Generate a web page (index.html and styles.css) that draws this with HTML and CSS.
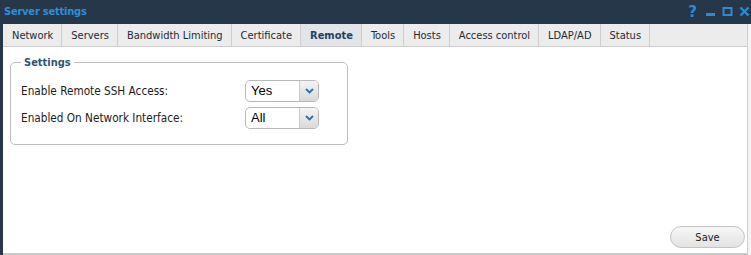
FILE: index.html
```html
<!DOCTYPE html>
<html lang="en">
<head>
  <meta charset="UTF-8" />
  <title>Server settings</title>
  <link rel="stylesheet" href="styles.css">
</head>
<body>

  <div class="window">
    <div class="titlebar">
      <span class="title">Server settings</span>
      <div class="controls">
        <span class="help">?</span>
        <svg width="11" height="11" viewBox="0 0 11 11"><rect x="1" y="7" width="9" height="3" fill="#2a8ad2"/></svg>
        <svg width="11" height="11" viewBox="0 0 11 11"><rect x="1.5" y="2" width="8" height="7" fill="none" stroke="#2a8ad2" stroke-width="2"/></svg>
        <svg width="11" height="11" viewBox="0 0 11 11"><path d="M1.5 1.5 L9.5 9.5 M9.5 1.5 L1.5 9.5" stroke="#2a8ad2" stroke-width="2.4"/></svg>
      </div>
    </div>

    <div class="frame">
      <ul class="tabs">
        <li>Network</li>
        <li>Servers</li>
        <li>Bandwidth Limiting</li>
        <li>Certificate</li>
        <li class="active">Remote</li>
        <li>Tools</li>
        <li>Hosts</li>
        <li>Access control</li>
        <li>LDAP/AD</li>
        <li>Status</li>
      </ul>

      <div class="content">
        <fieldset class="settings">
          <legend>Settings</legend>
          <div class="form-row">
            <label>Enable Remote SSH Access:</label>
            <div class="select">
              <span class="value">Yes</span>
              <span class="arrow"><svg width="9" height="6" viewBox="0 0 9 6"><path d="M1 1 L4.5 4.5 L8 1" fill="none" stroke="#2f6fa8" stroke-width="1.8"/></svg></span>
            </div>
          </div>
          <div class="form-row">
            <label>Enabled On Network Interface:</label>
            <div class="select">
              <span class="value">All</span>
              <span class="arrow"><svg width="9" height="6" viewBox="0 0 9 6"><path d="M1 1 L4.5 4.5 L8 1" fill="none" stroke="#2f6fa8" stroke-width="1.8"/></svg></span>
            </div>
          </div>
        </fieldset>

        <div class="footer">
          <button class="save">Save</button>
        </div>
      </div>
    </div>
  </div>

</body>
</html>
```

FILE: styles.css
```css
body {
  margin: 0;
  font-family: 'DejaVu Sans Condensed', 'DejaVu Sans', sans-serif;
  background: #fff;
}

.window {
  width: 751px;
  height: 255px;
  display: flex;
  flex-direction: column;
  background: #27374a;
}

.titlebar {
  height: 24px;
  display: flex;
  align-items: center;
  justify-content: space-between;
  padding: 0 1px 0 4px;
}

.title {
  color: #2b8fd8;
  font-weight: bold;
  font-size: 11px;
  letter-spacing: -0.2px;
  margin-top: -2px;
}

.controls {
  display: flex;
  align-items: center;
  gap: 6px;
  margin-top: -1px;
}

.controls .help {
  color: #2a8ad2;
  font-weight: bold;
  font-size: 15px;
  font-family: 'DejaVu Sans', sans-serif;
  margin-right: 2px;
}

.frame {
  flex: 1;
  margin: 0 3px 0 3px;
  background: #fff;
  display: flex;
  flex-direction: column;
  border-right: 1px solid #cfcfcf;
  border-bottom: 2px solid #c9c9c9;
  box-shadow: 3px 0 0 #f4f4f4;
}

.tabs {
  list-style: none;
  margin: 0;
  padding: 0;
  display: flex;
  height: 22px;
  background: #ececec;
  border-bottom: 1px solid #cccccc;
}

.tabs li {
  padding: 1px 8px 0 9px;
  font-size: 11px;
  color: #1d2a36;
  line-height: 21px;
  border-right: 1px solid #cfcfcf;
}

.tabs li.active {
  background: #e1e5e9;
  color: #1f3f5e;
  font-weight: bold;
}

.content {
  flex: 1;
  display: flex;
  flex-direction: column;
  justify-content: space-between;
}

.settings {
  width: 338px;
  box-sizing: border-box;
  margin: 9px 0 0 7px;
  padding: 8px 10px 13px 10px;
  border: 1px solid #bdbdbd;
  border-radius: 5px;
}

.settings legend {
  font-weight: bold;
  font-size: 11px;
  color: #2c5670;
  padding: 0 3px;
}

.form-row {
  display: flex;
  align-items: center;
  height: 27px;
}

.form-row label {
  width: 224px;
  font-size: 11.7px;
  color: #1c1c1c;
}

.select {
  width: 74px;
  height: 22px;
  box-sizing: border-box;
  border: 1px solid #b9b9b9;
  border-radius: 5px;
  display: flex;
  overflow: hidden;
  background: #fff;
}

.select .value {
  flex: 1;
  font-family: 'Liberation Sans', sans-serif;
  font-size: 13px;
  line-height: 20px;
  padding-left: 5px;
  color: #000;
}

.select .arrow {
  width: 18px;
  display: flex;
  align-items: center;
  justify-content: center;
  border-left: 1px solid #c9c9c9;
  background: linear-gradient(#f4f4f4, #d9d9d9);
}

.footer {
  display: flex;
  justify-content: flex-end;
  padding: 0 2px 5px 0;
}

.save {
  width: 75px;
  height: 22px;
  border: 1px solid #c4c4c4;
  border-radius: 11px;
  background: linear-gradient(#f6f6f6, #e3e3e3);
  font-family: 'DejaVu Sans Condensed', sans-serif;
  font-size: 11px;
  color: #1c1c1c;
}
```
